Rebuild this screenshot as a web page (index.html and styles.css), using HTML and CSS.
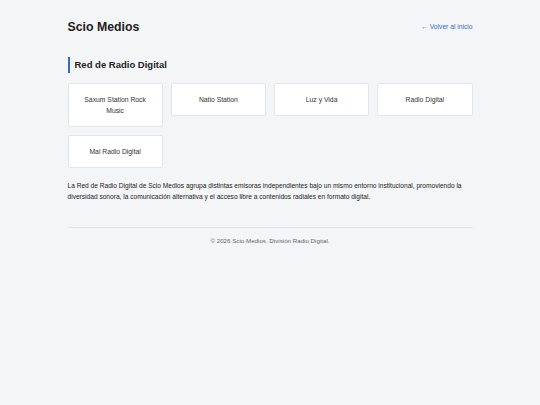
FILE: index.html
```html
<!DOCTYPE html>
<html lang="es">

<head>
  <meta charset="UTF-8">
  <title>Red de Radio Digital - Scio Medios</title>
  <link rel="stylesheet" href="styles.css">
</head>

<body>
  <div class="wrap">
    <header class="top">
      <div class="brand">Scio Medios</div>
      <a class="back" href="#">← Volver al inicio</a>
    </header>

    <section class="red">
      <h2 class="red-title">Red de Radio Digital</h2>
      <div class="cards">
        <div class="card">Saxum Station Rock Music</div>
        <div class="card">Natio Station</div>
        <div class="card">Luz y Vida</div>
        <div class="card">Radio Digital</div>
        <div class="card">Mal Radio Digital</div>
      </div>
      <p class="info">La Red de Radio Digital de Scio Medios agrupa distintas emisoras independientes bajo un mismo entorno institucional, promoviendo la diversidad sonora, la comunicación alternativa y el acceso libre a contenidos radiales en formato digital.</p>
    </section>

    <footer class="foot">© 2026 Scio Medios. División Radio Digital.</footer>
  </div>
</body>

</html>
```

FILE: styles.css
```css
* {
  padding: 0;
  margin: 0;
  box-sizing: border-box;
}

body {
  background-color: #f4f5f7;
  font-family: "Liberation Sans", Arial, sans-serif;
  color: #222;
}

.wrap {
  width: 405px;
  margin: 0 auto;
  padding-top: 18px;
}

.top {
  display: flex;
  justify-content: space-between;
  align-items: center;
  height: 17px;
}

.brand {
  font-size: 12.3px;
  font-weight: bold;
  color: #222;
}

.back {
  font-size: 6.7px;
  color: #2f6fd0;
  text-decoration: none;
}

.red {
  margin-top: 22px;
}

.red-title {
  font-size: 9.5px;
  font-weight: bold;
  color: #222;
  border-left: 2px solid #2f6fb8;
  padding-left: 5px;
  line-height: 16px;
}

.cards {
  display: grid;
  grid-template-columns: repeat(4, 1fr);
  gap: 8px 8px;
  align-items: start;
  margin-top: 10px;
}

.card {
  background-color: #fff;
  border: 1px solid #e4e6ea;
  border-radius: 2px;
  padding: 10px 8px;
  text-align: center;
  font-size: 6.8px;
  line-height: 11px;
  color: #333;
}

.info {
  margin-top: 12px;
  font-size: 6.6px;
  line-height: 11px;
  color: #222;
}

.foot {
  margin-top: 25px;
  border-top: 1px solid #e3e5e8;
  padding-top: 9px;
  text-align: center;
  font-size: 6.2px;
  color: #666;
}
```
